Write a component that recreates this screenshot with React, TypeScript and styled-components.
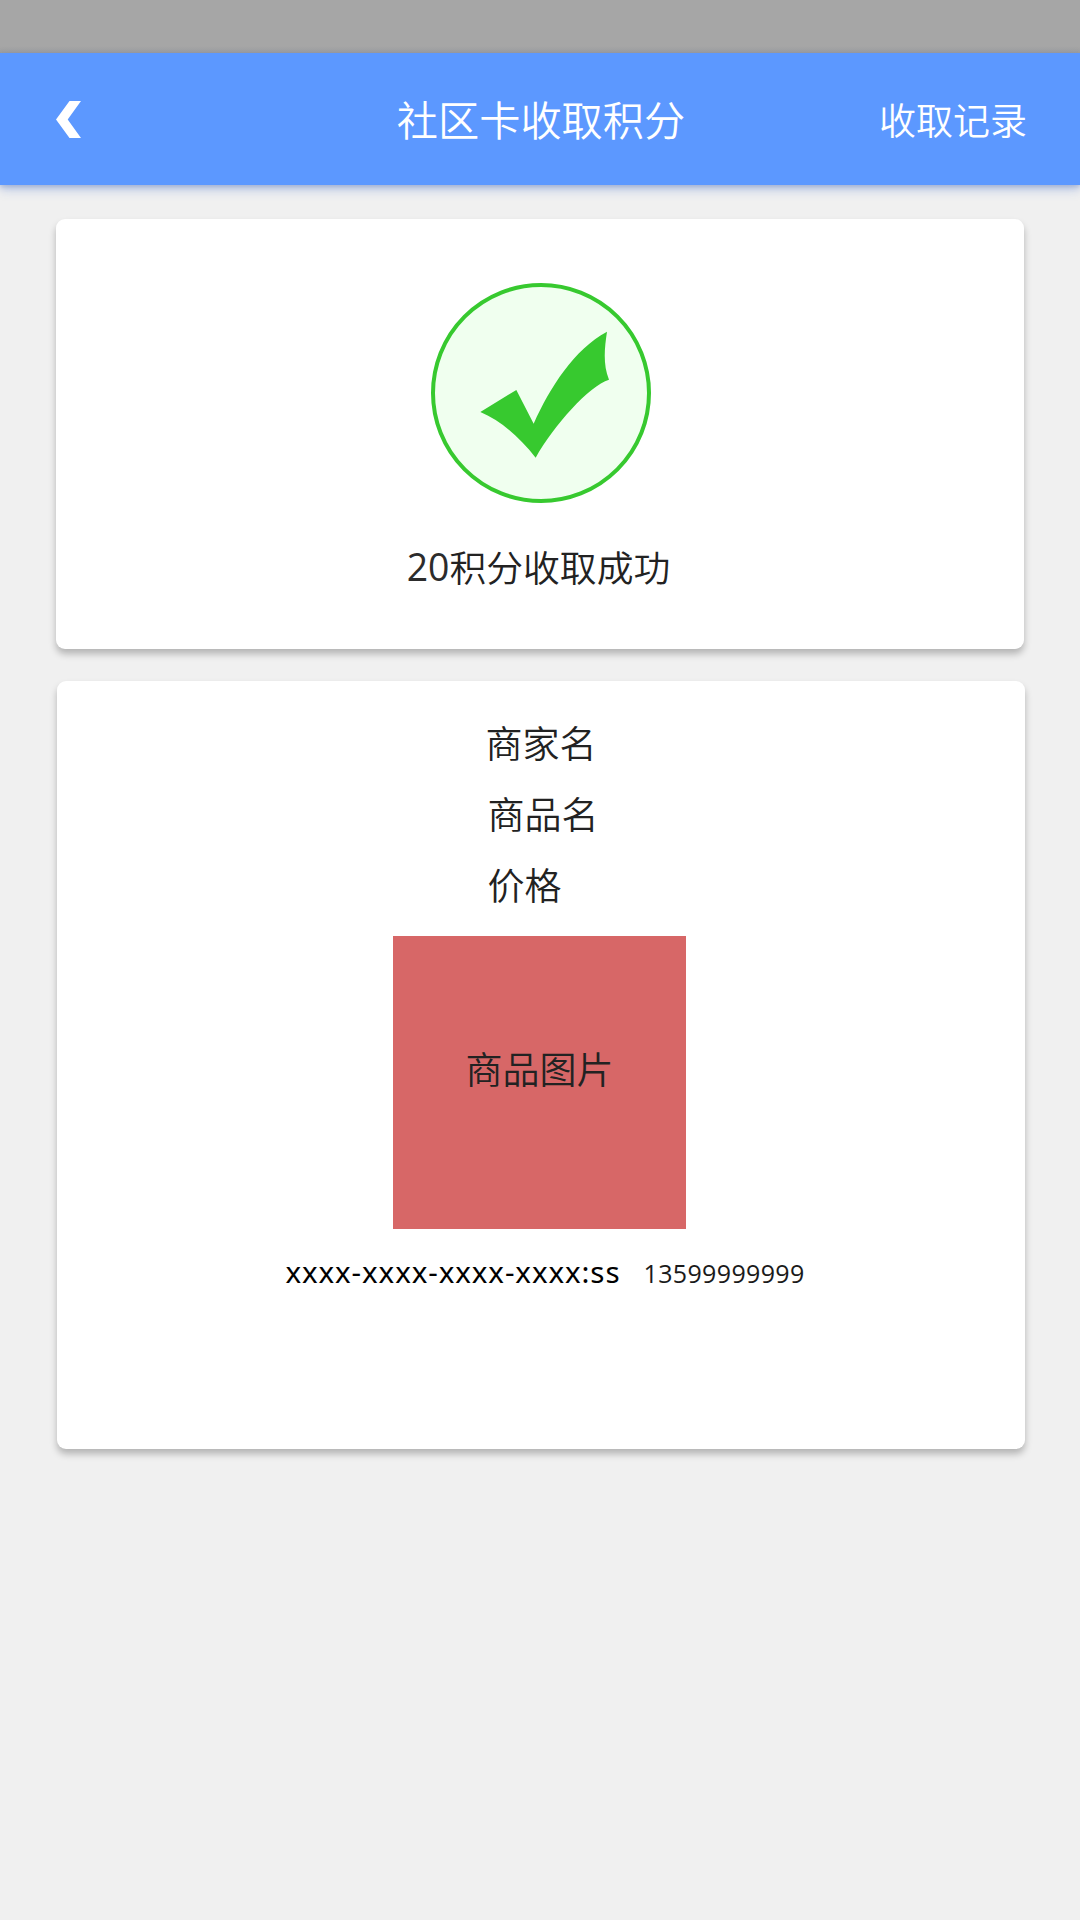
import React from "react";
import styled, { createGlobalStyle } from "styled-components";

const GlobalStyle = createGlobalStyle`
  * { box-sizing: border-box; }
  body {
    margin: 0;
    background: #f0f0f0;
    font-family: "Noto Sans", "Noto Sans CJK SC", sans-serif;
    color: #222;
  }
`;

const Screen = styled.div`
  display: flex;
  flex-direction: column;
  width: 1080px;
  height: 1920px;
  overflow: hidden;
  background: #f0f0f0;
`;

const StatusBar = styled.div`
  flex: none;
  height: 53px;
  background: linear-gradient(#a6a6a6 46px, #9f9f9f);
`;

const Header = styled.header`
  flex: none;
  display: grid;
  grid-template-columns: 1fr auto 1fr;
  align-items: center;
  height: 132px;
  padding: 0 53px 0 56px;
  background: #5c98ff;
  box-shadow: 0 5px 10px rgba(70, 120, 220, 0.28), 0 2px 5px rgba(60, 80, 130, 0.28);
  color: #fff;
`;

const BackButton = styled.button`
  justify-self: start;
  display: flex;
  padding: 0;
  border: 0;
  background: none;
`;

const Title = styled.h1`
  margin: 0;
  padding: 1px 1px 0 0;
  font-size: 41.2px;
  font-weight: 350;
  line-height: 60px;
`;

const HeaderLink = styled.a`
  justify-self: end;
  padding-top: 3px;
  font-size: 37px;
  font-weight: 350;
  line-height: 60px;
`;

const Content = styled.main`
  display: flex;
  flex-direction: column;
  gap: 32px;
  padding: 34px 55px 0 56px;
`;

const Card = styled.section<{ $height: number; $top: number; $shift?: number }>`
  display: flex;
  flex-direction: column;
  align-items: center;
  width: 968px;
  height: ${(p) => p.$height}px;
  margin-left: ${(p) => p.$shift ?? 0}px;
  padding-top: ${(p) => p.$top}px;
  border-radius: 9px;
  background: #fff;
  box-shadow: 0 5px 7px rgba(0, 0, 0, 0.25);
`;

const ResultIcon = styled.svg`
  flex: none;
  width: 220px;
  height: 220px;
  margin-left: 2px;
`;

const ResultText = styled.p`
  margin: 35px 3px 0 0;
  font-size: 36.8px;
  font-weight: 350;
  line-height: 60px;
`;

const Points = styled.span`
  font-family: "Open Sans", "Noto Sans", sans-serif;
  font-size: 37.4px;
  font-weight: 400;
  line-height: 1;
  vertical-align: 1px;
  color: #2c2c2c;
`;

const InfoList = styled.ul`
  width: 111px;
  margin: 0;
  padding: 0;
  list-style: none;
`;

const InfoItem = styled.li<{ $indent?: number }>`
  padding-left: ${(p) => p.$indent ?? 0}px;
  font-size: 37px;
  font-weight: 350;
  line-height: 71px;
  white-space: nowrap;
`;

const ProductImage = styled.div`
  flex: none;
  display: flex;
  justify-content: center;
  width: 293px;
  height: 293px;
  margin: 15px 3px 0 0;
  padding-top: 104px;
  background: #d76767;
  font-size: 37px;
  font-weight: 350;
  line-height: 60px;
`;

const Footnote = styled.div`
  display: flex;
  align-items: baseline;
  gap: 23px;
  margin: 23px 0 0 8px;
  color: #000;
  line-height: 40px;
`;

const CardCode = styled.span`
  font-size: 29.6px;
  letter-spacing: 0.9px;
`;

const Phone = styled.span`
  font-family: "Open Sans", "Noto Sans", sans-serif;
  font-size: 25px;
  letter-spacing: 0.35px;
  color: #1a1a1a;
`;

export default function App() {
  return (
    <>
      <GlobalStyle />
      <Screen>
        <StatusBar />
        <Header>
          <BackButton aria-label="返回">
            <svg width="25" height="37" viewBox="0 0 25 37">
              <path d="M13.5 0H25L11.7 18.5 25 37H13.5L0 18.5Z" fill="#fff" />
            </svg>
          </BackButton>
          <Title>社区卡收取积分</Title>
          <HeaderLink>收取记录</HeaderLink>
        </Header>
        <Content>
          <Card $height={430} $top={64}>
            <ResultIcon viewBox="33 39 660 660">
              <circle cx="363" cy="369" r="324" fill="#f0ffef" stroke="#37c92f" strokeWidth="12" />
              <path
                d="M181 426L289 360L341 461C391 350 462 239 561 185C553 238 549 284 567 329C507 347 402 466 347 563C300 504 244 452 181 426Z"
                fill="#37c92f"
              />
            </ResultIcon>
            <ResultText>
              <Points>20</Points>积分收取成功
            </ResultText>
          </Card>
          <Card $height={768} $top={27} $shift={1}>
            <InfoList>
              <InfoItem>商家名</InfoItem>
              <InfoItem $indent={2}>商品名</InfoItem>
              <InfoItem $indent={2}>价格</InfoItem>
            </InfoList>
            <ProductImage>商品图片</ProductImage>
            <Footnote>
              <CardCode>xxxx-xxxx-xxxx-xxxx:ss</CardCode>
              <Phone>13599999999</Phone>
            </Footnote>
          </Card>
        </Content>
      </Screen>
    </>
  );
}
